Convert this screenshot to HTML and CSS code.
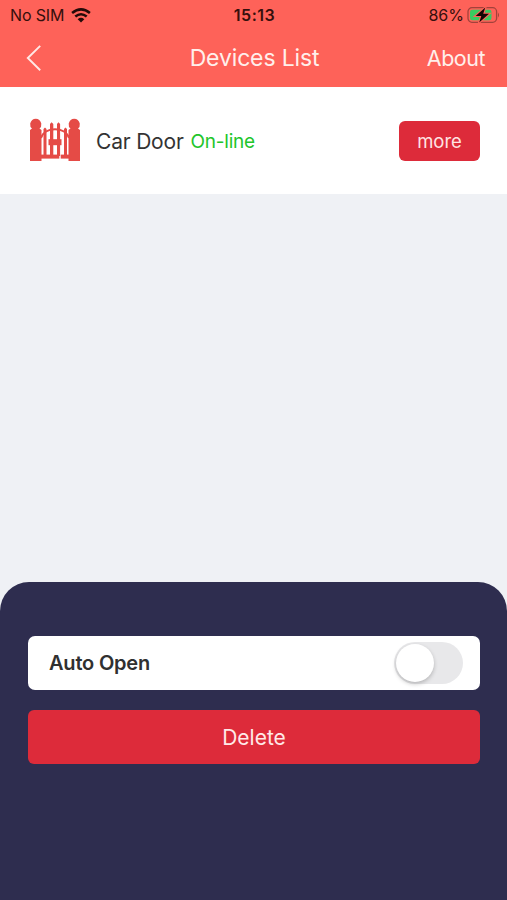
FILE: index.html
```html
<!DOCTYPE html>
<html lang="en">
<head>
<meta charset="utf-8">
<title>Devices List</title>
<link rel="stylesheet" href="styles.css">
</head>
<body>
<div class="app">
  <header class="header">
    <div class="status">
      <div class="status-left">
        <span class="carrier">No SIM</span>
        <svg class="wifi" width="20" height="15" viewBox="0 0 20 15">
          <g fill="none" stroke="#240b09" stroke-width="2.6">
            <path d="M1.1 5.1Q10-2.2 18.9 5.1"/>
            <path d="M4.3 8.6Q10 3.9 15.7 8.6"/>
          </g>
          <path d="M6.7 11.2Q10 8.5 13.3 11.2L10 14.5Z" fill="#240b09"/>
        </svg>
      </div>
      <span class="time">15:13</span>
      <div class="status-right">
        <span class="percent">86%</span>
        <svg class="battery" width="34" height="18" viewBox="0 0 34 18">
          <rect x="1" y="1.7" width="28.6" height="14.6" rx="4" fill="none" stroke="#a2423b" stroke-width="1.3"/>
          <rect x="3" y="3.7" width="21.5" height="10.6" rx="2.4" fill="#39ca60"/>
          <path d="M31 6.5Q33 9 31 11.5Z" fill="#a2423b"/>
          <path d="M18.3 1.5L8.6 10H14.3L12.2 16.5L22 7.8H16.2Z" fill="#140705" stroke="#fe6259" stroke-width="2.2" paint-order="stroke"/>
        </svg>
      </div>
    </div>
    <nav class="nav">
      <svg class="back" width="18" height="28" viewBox="0 0 18 28">
        <path d="M15.2 1.9L2.8 14L15.2 26.2" fill="none" stroke="#ffe9e6" stroke-width="1.9"/>
      </svg>
      <span class="title">Devices List</span>
      <span class="about">About</span>
    </nav>
  </header>
  <main class="list">
    <section class="device">
      <svg class="gate" width="52" height="44" viewBox="0 0 52 44">
        <g fill="#e54b46">
          <path d="M3 10.5Q.8 9 1.2 5.5Q2.5.8 6.8.8Q11 .8 12.3 5.5Q12.7 9 10.5 10.5L12.5 12V43H1V12Z"/>
          <path d="M41.5 10.5Q39.3 9 39.7 5.5Q41 .8 45.2.8Q49.5.8 50.8 5.5Q51.2 9 49 10.5L51 12V43H39.5V12Z"/>
          <path d="M14.5 11L16 9.5L17.5 11V38H14.5ZM21 6L22.6 4.3L24.3 6V38H21ZM28 6L29.5 4.3L31.1 6V38H28ZM35 11L36.5 9.5L38 11V38H35Z"/>
          <rect x="19.5" y="21.2" width="13" height="6"/>
          <rect x="12" y="36.6" width="18.3" height="4"/>
          <rect x="31.7" y="36.6" width="8.3" height="4"/>
        </g>
        <path d="M12 20C16 8.3 36 8.3 40 20" fill="none" stroke="#e54b46" stroke-width="2"/>
      </svg>
      <span class="name">Car Door</span>
      <span class="state">On-line</span>
      <button class="more">more</button>
    </section>
  </main>
  <section class="sheet">
    <div class="option">
      <span class="option-label">Auto Open</span>
      <span class="switch"><span class="knob"></span></span>
    </div>
    <button class="delete">Delete</button>
  </section>
</div>
</body>
</html>
```

FILE: styles.css
```css
* { box-sizing: border-box; }
body { margin: 0; font-family: Inter, "Liberation Sans", sans-serif; }
button { border: 0; padding: 0; font-family: inherit; }
svg { display: block; flex: none; }
span { white-space: nowrap; }
.app { width: 507px; height: 900px; display: flex; flex-direction: column; background: #eff1f5; overflow: hidden; }
.header { height: 87px; background: #fe6259; }
.status { height: 29px; display: grid; grid-template-columns: 1fr auto 1fr; align-items: center; padding: 0 6px 0 10px; color: #350f0c; }
.status-left, .status-right { display: flex; align-items: center; }
.status-left { gap: 7px; }
.status-right { justify-content: flex-end; gap: 3px; }
.carrier, .percent { font-size: 16px; line-height: 29px; padding-top: 1px; }
.carrier { letter-spacing: -.15px; }
.time { font-size: 16px; font-weight: 600; line-height: 29px; padding-top: 1px; letter-spacing: .5px; margin-right: 2px; }
.nav { height: 58px; display: grid; grid-template-columns: 1fr auto 1fr; align-items: center; padding: 0 22px 0 25px; color: #ffefeb; }
.title { font-size: 23px; letter-spacing: -.15px; margin-right: 1px; }
.about { font-size: 21.5px; letter-spacing: -.5px; justify-self: end; }
.list { flex: 1; }
.device { height: 107px; display: flex; align-items: center; background: #fff; padding: 2px 27px 0 29px; }
.gate { margin-bottom: 3px; }
.name { font-size: 21px; color: #333; margin-left: 15px; letter-spacing: -.2px; }
.state { font-size: 19px; color: #22c52b; margin-left: 7px; letter-spacing: -.25px; }
.more { width: 81px; height: 40px; margin: 0 0 2px auto; border-radius: 6px; background: #dd2b3a; color: #ffe4e3; font-size: 18.5px; padding-top: 1px; }
.sheet { height: 318px; border-radius: 29px 29px 0 0; background: #2e2d4f; padding: 54px 27px 0 28px; display: flex; flex-direction: column; gap: 20px; }
.option { height: 54px; border-radius: 7px; background: #fff; display: flex; align-items: center; justify-content: space-between; padding: 0 17px 0 21px; }
.option-label { font-size: 20px; font-weight: 600; color: #303030; letter-spacing: -.2px; }
.switch { width: 69px; height: 42px; border-radius: 21px; background: #e8e8ea; padding: 2px; }
.knob { display: block; width: 38px; height: 38px; border-radius: 50%; background: #fff; box-shadow: 0 2px 4px rgba(0, 0, 0, .22); }
.delete { height: 54px; border-radius: 6px; background: #dd2b3a; color: #ffe9e8; font-size: 21px; }
```
